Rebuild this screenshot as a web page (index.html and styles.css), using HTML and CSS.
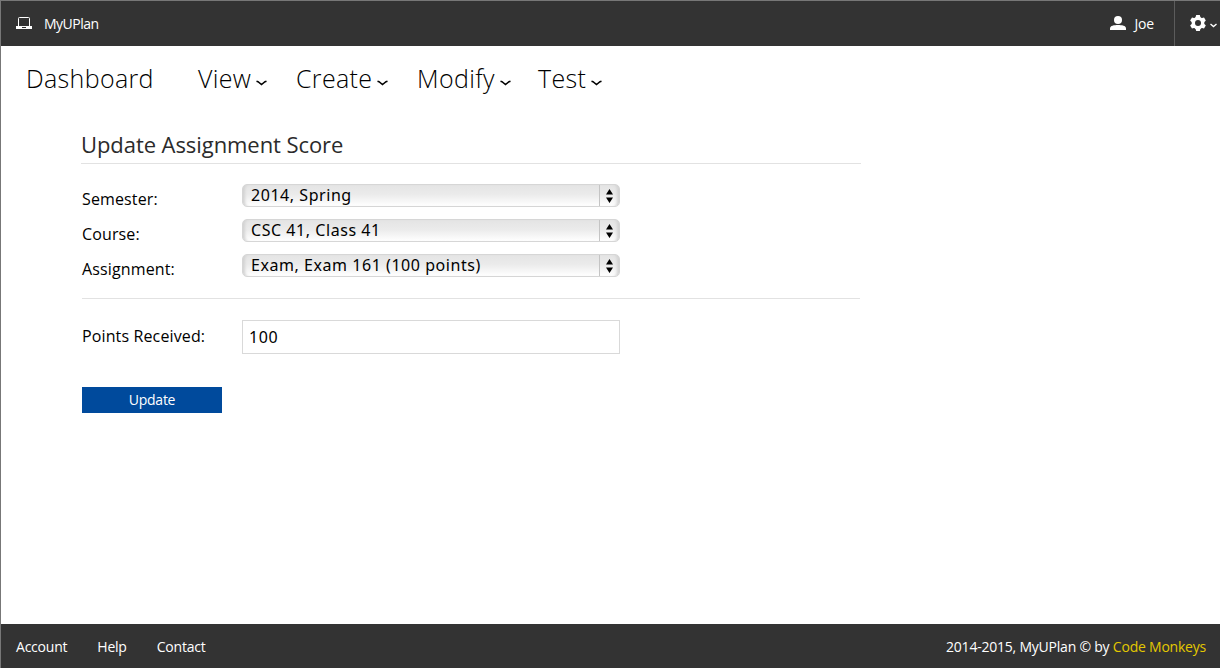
FILE: index.html
```html
<!DOCTYPE html>
<html lang="en">
<head>
<meta charset="utf-8">
<title>MyUPlan</title>
<link rel="stylesheet" href="styles.css">
</head>
<body>
<header class="topbar">
  <a class="brand">
    <svg class="laptop" width="16" height="12" viewBox="0 0 16 12"><path d="M2.5 9V1.400q0-.9.9-.9h9.200q.9 0 .9.9V9" fill="none" stroke="#fff"/><path fill="#fff" d="M0 9h16v3H0z"/><path fill="#333" d="M6 10h4v1H6z"/></svg>
    <span class="name">MyUPlan</span>
  </a>
  <div class="account">
    <a class="user">
      <svg class="person" width="16" height="14" viewBox="0 0 16 14" fill="#fff"><circle cx="8" cy="4" r="4"/><path d="M0 14v-1.800C0 9.600 4.200 8.900 8 8.900s8 .7 8 3.300V14z"/></svg>
      <span>Joe</span>
    </a>
    <a class="settings">
      <svg class="gear" width="16" height="16" viewBox="0 0 16 16"><g fill="#fff"><circle cx="8" cy="8" r="6.300"/><path id="tooth" d="M5.300 3 6.200 0h3.600l.9 3z"/><use href="#tooth" transform="rotate(60 8 8)"/><use href="#tooth" transform="rotate(120 8 8)"/><use href="#tooth" transform="rotate(180 8 8)"/><use href="#tooth" transform="rotate(240 8 8)"/><use href="#tooth" transform="rotate(300 8 8)"/></g><circle cx="8" cy="8" r="3" fill="#333"/></svg>
      <svg class="tiny" width="7" height="5" viewBox="0 0 7 5"><path d="M.5 1 3.500 3.500 6.500 1" fill="none" stroke="#fff" stroke-width="1.400"/></svg>
    </a>
  </div>
</header>
<nav class="menu">
  <a class="item dashboard"><span>Dashboard</span></a>
  <a class="item view"><span>View</span><svg class="caret" viewBox="0 0 11 6"><path d="M.5 1.200 2 1.700 5.500 4.500 9 1.700 10.500 1.200"/></svg></a>
  <a class="item create"><span>Create</span><svg class="caret" viewBox="0 0 11 6"><path d="M.5 1.200 2 1.700 5.500 4.500 9 1.700 10.500 1.200"/></svg></a>
  <a class="item modify"><span>Modify</span><svg class="caret" viewBox="0 0 11 6"><path d="M.5 1.200 2 1.700 5.500 4.500 9 1.700 10.500 1.200"/></svg></a>
  <a class="item test"><span>Test</span><svg class="caret" viewBox="0 0 11 6"><path d="M.5 1.200 2 1.700 5.500 4.500 9 1.700 10.500 1.200"/></svg></a>
</nav>
<main class="content">
  <h1 class="title"><span>Update Assignment Score</span></h1>
  <form class="form">
    <div class="row"><label>Semester:</label><div class="select"><span class="value">2014, Spring</span><span class="arrows"><svg width="7" height="14" viewBox="0 0 7 14"><path d="M3.500 0 7 5.500H0zM3.500 14 7 8.500H0z"/></svg></span></div></div>
    <div class="row"><label>Course:</label><div class="select"><span class="value">CSC 41, Class 41</span><span class="arrows"><svg width="7" height="14" viewBox="0 0 7 14"><path d="M3.500 0 7 5.500H0zM3.500 14 7 8.500H0z"/></svg></span></div></div>
    <div class="row"><label>Assignment:</label><div class="select"><span class="value">Exam, Exam 161 (100 points)</span><span class="arrows"><svg width="7" height="14" viewBox="0 0 7 14"><path d="M3.500 0 7 5.500H0zM3.500 14 7 8.500H0z"/></svg></span></div></div>
    <hr class="divider">
    <div class="row points"><label>Points Received:</label><input class="input" type="text" value="100"></div>
    <button class="submit" type="button">Update</button>
  </form>
</main>
<footer class="footer">
  <div class="links"><a>Account</a><a>Help</a><a>Contact</a></div>
  <div class="copyright">2014-2015, MyUPlan © by <a class="credit">Code Monkeys</a></div>
</footer>
</body>
</html>
```

FILE: styles.css
```css
* { box-sizing: border-box; }
body {
  margin: 0;
  height: 668px;
  overflow: hidden;
  display: flex;
  flex-direction: column;
  border-left: 1px solid #777;
  background: #fff;
  color: #000;
  font-family: "Open Sans", "Noto Sans", sans-serif;
}
.topbar {
  height: 46px;
  flex: none;
  display: flex;
  justify-content: space-between;
  background: #333;
  border-top: 1px solid #777;
  color: #fff;
  font-size: 14px;
  letter-spacing: -.2px;
}
.brand { display: flex; align-items: center; padding-left: 15px; gap: 12px; }
.name { letter-spacing: -.5px; }
.laptop { margin-top: -1px; }
.person { margin-top: -1px; }
.account { display: flex; }
.user { display: flex; align-items: center; gap: 9px; padding-right: 20px; }
.settings { display: flex; align-items: center; width: 46px; padding-left: 15px; gap: 4px; border-left: 1px solid #5c5c5c; }
.gear { margin-top: -1px; }
.tiny { margin-top: 4px; }
.menu { flex: none; height: 66px; display: flex; align-items: center; padding: 0 0 2px 25px; font-size: 25px; font-weight: 300; letter-spacing: .35px; }
.item { display: flex; align-items: center; gap: 5px; }
.dashboard { width: 172px; }
.view { width: 98px; }
.create { width: 121px; }
.modify { width: 121px; }
.caret { width: 11px; height: 6px; margin-top: 9px; fill: none; stroke: #000; stroke-width: 1.500; }
.content { flex: 1; width: 860px; padding: 18px 0 0 80px; }
.title { margin: 0; height: 34px; border-bottom: 1px solid #e2e2e2; font-size: 22px; line-height: 28px; font-weight: 400; letter-spacing: -.07px; color: #2b2b2b; }
.form { padding-top: 20px; padding-left: 1px; }
.row { display: flex; height: 23px; margin-bottom: 12px; font-size: 16px; }
.row label { width: 160px; line-height: 30px; letter-spacing: .13px; }
.select {
  width: 378px;
  height: 23px;
  display: flex;
  border: 1px solid #d6d6d6;
  border-radius: 5px;
  background: linear-gradient(#e4e4e4, #ebebeb 45%, #fff);
  box-shadow: inset 4px 0 3px -2px #d2d2d2, inset -4px 0 3px -2px #d2d2d2;
}
.value { flex: 1; padding-left: 8px; line-height: 21px; letter-spacing: .55px; font-family: "Noto Sans", sans-serif; }
.arrows { width: 20px; display: flex; align-items: center; padding-left: 6px; border-left: 1px solid #c4c4c4; }
.divider { width: 778px; height: 1px; margin: 21px 0; border: 0; background: #e2e2e2; }
.points { height: 34px; margin: 0; }
.points label { line-height: 32px; }
.input { width: 378px; height: 34px; padding: 0 6px; border: 1px solid #d9d9d9; font: 16px "Noto Sans", sans-serif; letter-spacing: .65px; outline: 0; }
.submit { display: block; width: 140px; height: 26px; margin-top: 33px; padding: 0 0 2px; border: 0; background: #004a9c; color: #fff; font: 14px "Open Sans", sans-serif; letter-spacing: -.25px; }
.footer { flex: none; height: 44px; display: flex; align-items: center; justify-content: space-between; padding: 0 14px 0 15px; background: #333; color: #fff; font-size: 14px; letter-spacing: -.22px; }
.links { display: flex; gap: 30px; }
.credit { color: #e3c800; }
```
